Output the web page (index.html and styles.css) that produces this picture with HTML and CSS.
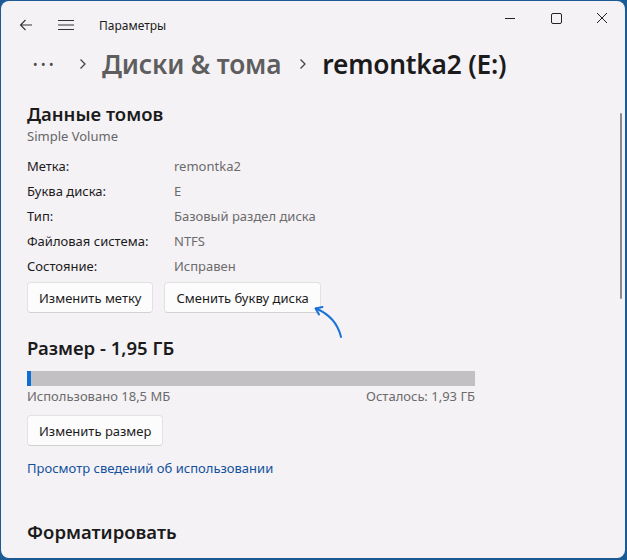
FILE: index.html
```html
<!DOCTYPE html>
<html lang="ru">
<head>
<meta charset="utf-8">
<title>Параметры</title>
<link rel="stylesheet" href="styles.css">
</head>
<body>
<div class="window">
  <div class="titlebar">
    <svg class="ico back" width="14" height="14" viewBox="0 0 14 14"><path d="M13 7H1.5M6.5 2L1.5 7l5 5" fill="none" stroke="#333" stroke-width="1.1"/></svg>
    <svg class="ico menu" width="16" height="12" viewBox="0 0 16 12"><path d="M0 1.5h16M0 6h16M0 10.5h16" fill="none" stroke="#333" stroke-width="1.1"/></svg>
    <span class="apptitle">Параметры</span>
    <div class="controls">
      <svg width="46" height="34" viewBox="0 0 46 34"><path d="M18 17.5h10" stroke="#222" stroke-width="1"/></svg>
      <svg width="46" height="34" viewBox="0 0 46 34"><rect x="18.5" y="12.5" width="10" height="10" rx="1.5" fill="none" stroke="#222" stroke-width="1"/></svg>
      <svg width="46" height="34" viewBox="0 0 46 34"><path d="M18 12l10 10M28 12l-10 10" stroke="#222" stroke-width="1"/></svg>
    </div>
  </div>
  <div class="crumbs">
    <span class="dots">•••</span>
    <svg class="chev first" width="8" height="12" viewBox="0 0 8 12"><path d="M1.5 1.5l4.5 4.5-4.5 4.5" fill="none" stroke="#444" stroke-width="1.3"/></svg>
    <span class="crumb">Диски &amp; тома</span>
    <svg class="chev" width="8" height="12" viewBox="0 0 8 12"><path d="M1.5 1.5l4.5 4.5-4.5 4.5" fill="none" stroke="#444" stroke-width="1.3"/></svg>
    <span class="crumb current">remontka2 (E:)</span>
  </div>
  <div class="content">
    <h2 class="sec">Данные томов</h2>
    <div class="sub">Simple Volume</div>
    <div class="props">
      <span class="k">Метка:</span><span class="v">remontka2</span>
      <span class="k">Буква диска:</span><span class="v">E</span>
      <span class="k">Тип:</span><span class="v">Базовый раздел диска</span>
      <span class="k">Файловая система:</span><span class="v">NTFS</span>
      <span class="k">Состояние:</span><span class="v">Исправен</span>
    </div>
    <div class="btnrow">
      <button class="btn">Изменить метку</button>
      <span class="btnwrap">
        <button class="btn">Сменить букву диска</button>
        <svg class="arrow" width="42" height="42" viewBox="0 0 42 42"><path d="M34 35C31 22 22 12 9 6.5" fill="none" stroke="#1a73d6" stroke-width="2" stroke-linecap="round"/><path d="M15.5 5L8.5 6.5l3.5 6" fill="none" stroke="#1a73d6" stroke-width="2" stroke-linecap="round" stroke-linejoin="round"/></svg>
      </span>
    </div>
    <h2 class="sec size">Размер - 1,95 ГБ</h2>
    <div class="bar"><div class="used" style="width:1%"></div></div>
    <div class="barlabels"><span>Использовано 18,5 МБ</span><span>Осталось: 1,93 ГБ</span></div>
    <button class="btn resize">Изменить размер</button>
    <a class="link" href="#">Просмотр сведений об использовании</a>
    <h2 class="sec fmt">Форматировать</h2>
  </div>
  <div class="scrollbar"></div>
</div>
</body>
</html>
```
FILE: styles.css
```css
html, body { margin: 0; padding: 0; }
body {
  background: #1b5a93;
  width: 627px;
  height: 560px;
  overflow: hidden;
  font-family: "Noto Sans", "Open Sans", sans-serif;
  color: #1b1b1b;
}
.window {
  position: relative;
  margin: 1px 0 0 1px;
  width: 624px;
  height: 557px;
  background: #f5f2f6;
  border-radius: 8px;
  overflow: hidden;
}
.titlebar {
  display: flex;
  align-items: center;
  height: 48px;
  padding-left: 18px;
}
.ico { display: block; }
.back { margin-top: -1px; }
.menu { margin-left: 25px; }
.apptitle {
  margin-left: 25px;
  font-size: 12px;
  color: #1b1b1b;
}
.controls {
  margin-left: auto;
  align-self: flex-start;
  display: flex;
}
.controls svg { display: block; }
.crumbs {
  display: flex;
  align-items: center;
  height: 36px;
  margin-top: -3px;
  padding-left: 32px;
}
.dots {
  font-size: 12px;
  letter-spacing: 3.5px;
  color: #444;
}
.chev.first { margin: 0 15px 0 22px; }
.crumb {
  font-size: 26.3px;
  font-weight: 600;
  color: #5e5e5e;
  letter-spacing: -0.2px;
}
.crumb + .chev { margin: 0 15px 0 18px; }
.crumb.current { color: #1b1b1b; }
.content {
  padding: 19px 0 0 26px;
}
.sec {
  margin: 0;
  font-size: 18.5px;
  font-weight: 600;
  line-height: 26px;
}
.sub {
  font-size: 13px;
  color: #666;
  line-height: 18px;
  margin-top: 0;
}
.props {
  display: grid;
  grid-template-columns: 147px auto;
  grid-auto-rows: 25px;
  align-items: center;
  margin-top: 8px;
  font-size: 13px;
  width: 360px;
}
.k { color: #1b1b1b; }
.v { color: #6b6b6b; }
.btnrow {
  display: flex;
  gap: 11px;
  margin-top: 4px;
}
.btnwrap { position: relative; }
.btn {
  font-family: inherit;
  font-size: 13px;
  color: #1b1b1b;
  background: #fdfcfd;
  border: 1px solid #e3e1e4;
  border-bottom-color: #d2d0d3;
  border-radius: 4px;
  height: 31px;
  padding: 0 11px;
  margin: 0;
  display: block;
}
.arrow {
  position: absolute;
  left: 143px;
  top: 20px;
}
.size { margin-top: 22px; }
.bar {
  margin-top: 10px;
  width: 448px;
  height: 15px;
  background: #c2c0c3;
}
.used {
  height: 100%;
  background: #0c6fd6;
}
.barlabels {
  width: 448px;
  display: flex;
  justify-content: space-between;
  font-size: 13px;
  color: #6b6b6b;
  margin-top: 0;
  line-height: 20px;
}
.resize { margin-top: 9px; }
.link {
  display: block;
  margin-top: 12px;
  font-size: 13px;
  color: #12519c;
  text-decoration: none;
  line-height: 20px;
}
.fmt { margin-top: 41px; }
.scrollbar {
  position: absolute;
  right: 3px;
  top: 112px;
  width: 2px;
  height: 186px;
  background: #8a8a8a;
  border-radius: 1px;
}
```
